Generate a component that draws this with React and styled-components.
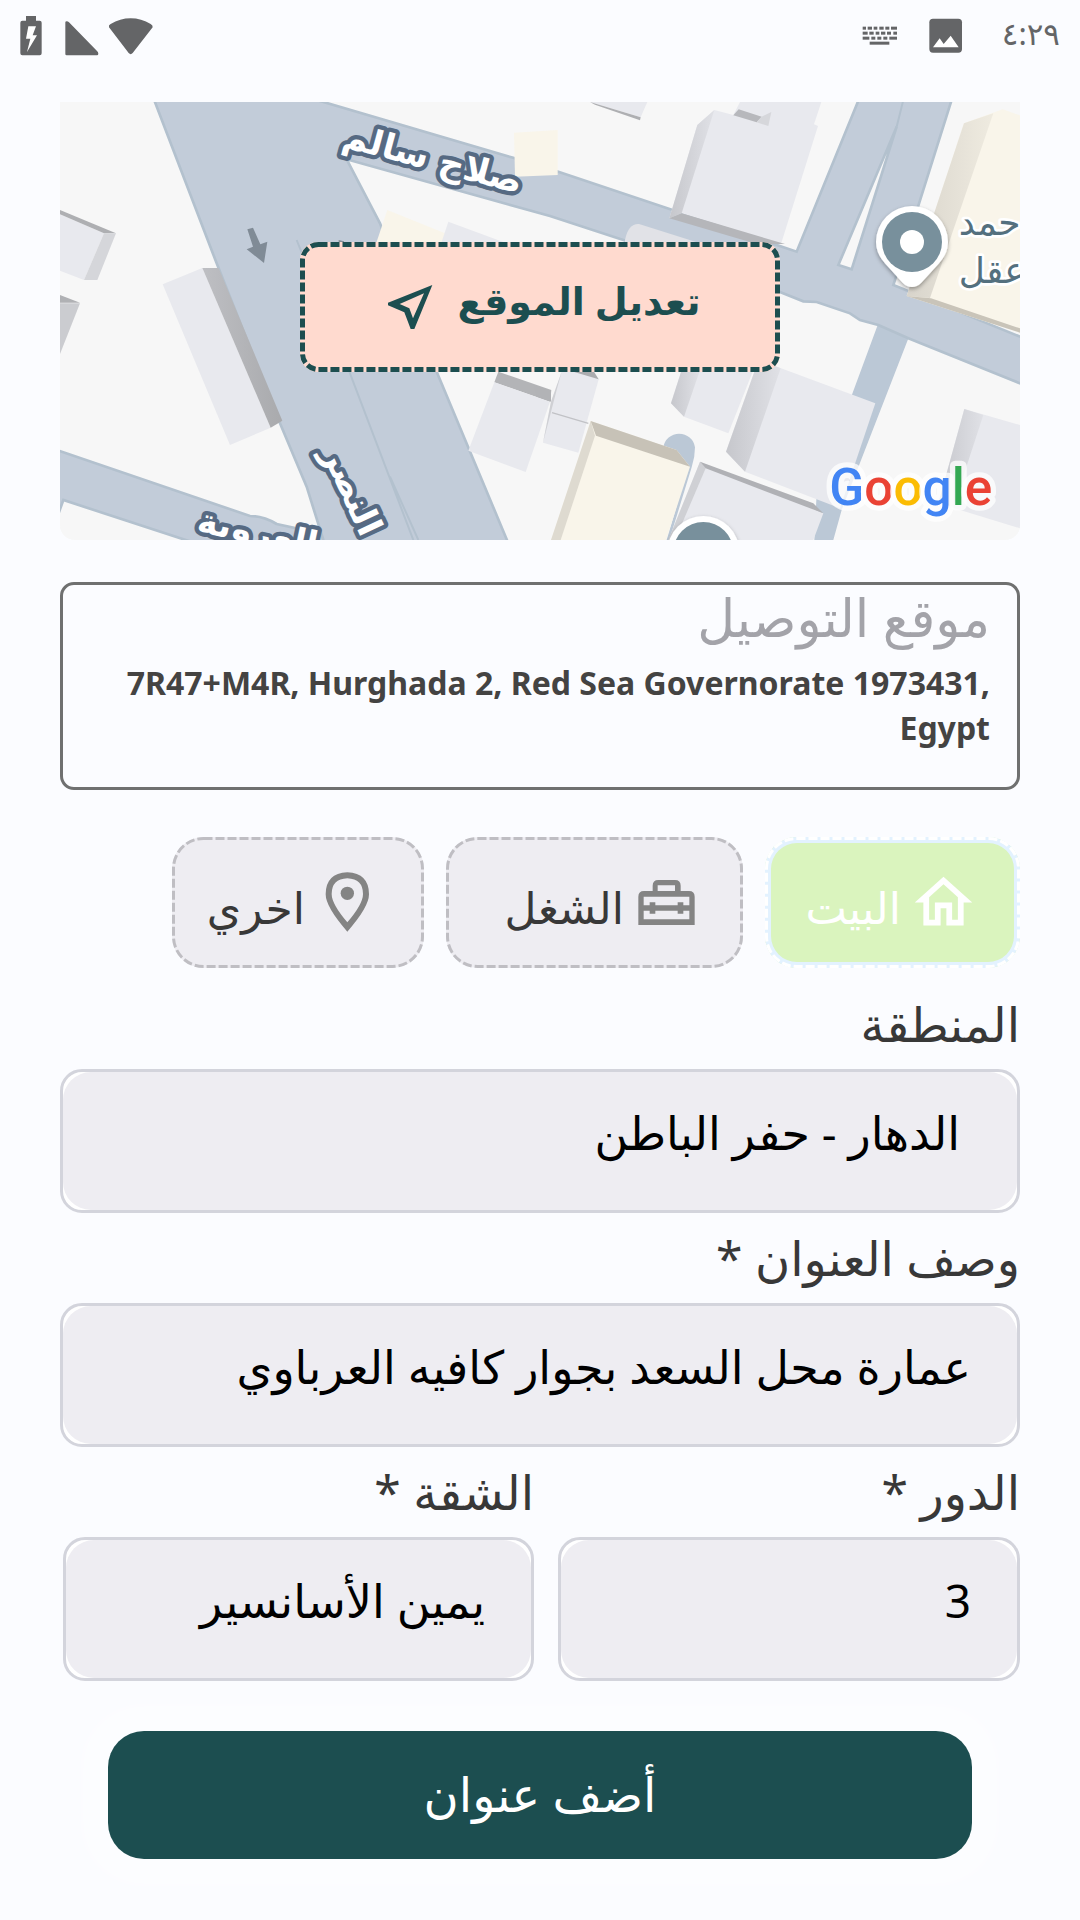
import React, { useState } from "react";
import styled, { createGlobalStyle } from "styled-components";

const GlobalStyle = createGlobalStyle`
  * { box-sizing: border-box; }
  body {
    margin: 0;
    background: #fbfcff;
    font-family: "Noto Sans", "DejaVu Sans", sans-serif;
    color: #383838;
  }
  button, input { font-family: inherit; }
`;

const Page = styled.div`
  min-height: 100vh;
  display: flex;
  flex-direction: column;
`;

const StatusBar = styled.header`
  display: flex;
  justify-content: space-between;
  align-items: center;
  height: 72px;
  margin-bottom: 30px;
  padding: 0 20px;
  color: #646567;
`;

const StatusGroup = styled.div`
  display: flex;
  align-items: center;
  gap: ${(p) => p.$gap}px;
`;

const Clock = styled.time`
  padding: 0 0 6px 8px;
  font-size: 31px;
  line-height: 40px;
`;

const Content = styled.main`
  display: flex;
  flex-direction: column;
  padding: 0 60px 60px;
`;

const MapPanel = styled.section`
  display: grid;
  place-items: center;
  height: 438px;
  margin-bottom: 42px;
  border-radius: 0 0 15px 15px;
  overflow: hidden;
  background: #f7f7f7;
  > * { grid-area: 1 / 1; }
`;

const MapDrawing = styled.svg`
  display: block;
  width: 100%;
  height: 438px;
`;

const Frame = styled.svg`
  position: absolute;
  inset: 0;
  width: 100%;
  height: 100%;
  overflow: visible;
  pointer-events: none;
`;

const EditButton = styled.button`
  position: relative;
  display: flex;
  align-items: center;
  justify-content: center;
  gap: 24px;
  width: 50%;
  height: 130px;
  margin-bottom: 28px;
  padding: 0 0 0 8px;
  border: 0;
  border-radius: 18px;
  background: #ffdacf;
  color: #1c4e50;
  font-size: 38px;
  line-height: 44px;
  font-weight: 700;
`;

const EditLabel = styled.span`
  padding-bottom: 14px;
`;

const AddressCard = styled.section`
  min-height: 208px;
  margin-bottom: 47px;
  padding: 0 27px 20px;
  border: 3px solid #6f7070;
  border-radius: 14px;
`;

const AddressTitle = styled.h2`
  margin: 0 0 12px;
  color: #a3a3a9;
  font-size: 52px;
  line-height: 63px;
  font-weight: 400;
`;

const AddressText = styled.p`
  margin: 0;
  color: #444342;
  font-size: 32px;
  line-height: 45px;
  font-weight: 700;
  text-align: right;
`;

const ChipRow = styled.div`
  display: flex;
  gap: 22px;
  margin-bottom: 11px;
`;

const Chip = styled.button`
  position: relative;
  display: flex;
  align-items: center;
  gap: 8px;
  min-width: ${(p) => p.$width}px;
  height: 131px;
  padding: 0 42px 0 32px;
  border: 0;
  border-radius: 32px;
  background: ${(p) => (p.$active ? "#daf4be" : "#eeedf2")};
  box-shadow: ${(p) => (p.$active ? "inset 0 0 0 6px #e3f2ff" : "none")};
  color: ${(p) => (p.$active ? "#ffffff" : "#383838")};
  font-size: 44px;
  line-height: 44px;
  svg { flex: none; }
`;

const ChipLabel = styled.span`
  padding-top: 8px;
`;

const Field = styled.div`
  display: flex;
  flex-direction: column;
`;

const FieldLabel = styled.label`
  height: 90px;
  font-size: 48px;
  line-height: 90px;
`;

const FieldBox = styled.div`
  border: 3px solid #d3d4dc;
  border-radius: 22px;
  background: #ffffff;
`;

const TextInput = styled.input`
  display: block;
  width: 100%;
  height: 138px;
  padding: 0 ${(p) => p.$inset}px 18px;
  border: 0;
  border-radius: 28px;
  outline: none;
  background: #eeedf2;
  color: #000000;
  font-size: 46px;
`;

const FieldPair = styled.div`
  display: grid;
  grid-template-columns: 462fr 471fr;
  gap: 24px;
  padding-left: 3px;
`;

const SubmitButton = styled.button`
  height: 128px;
  margin: 50px 48px 0;
  padding: 0 0 4px;
  border: 0;
  border-radius: 36px;
  background: #1c4e50;
  box-shadow: 0 0 12px 30px rgba(255, 255, 255, 0.3);
  color: #ffffff;
  font-size: 48px;
`;

const DashedFrame = ({ color, width, radius, dash }) => (
  <Frame aria-hidden="true">
    <rect
      x={width / 2}
      y={width / 2}
      rx={radius}
      fill="none"
      stroke={color}
      strokeWidth={width}
      strokeDasharray={dash}
      style={{ width: `calc(100% - ${width}px)`, height: `calc(100% - ${width}px)` }}
    />
  </Frame>
);

const BatteryIcon = () => (
  <svg width="24" height="40" viewBox="57 44 72 120" aria-hidden="true">
    <path fill="currentColor" d="M75 44h30v14h11q6 0 6 6v92q0 6-6 6H64q-6 0-6-6V64q0-6 6-6h11z" />
    <path fill="#fff" d="M82 75h23l-10 27h13l-30 50 10-40H75z" />
  </svg>
);

const SignalIcon = () => (
  <svg width="34" height="40" viewBox="191 44 102 120" aria-hidden="true">
    <path fill="currentColor" d="M192 63q0-3 4-3 4 0 7 3l84 86q4 4 4 8 0 5-4 5h-91q-4 0-4-4z" />
  </svg>
);

const WifiIcon = () => (
  <svg width="46" height="40" viewBox="314 44 138 120" aria-hidden="true">
    <path fill="currentColor" d="M317 78q-2-7 5-10 28-17 60-17t60 17q7 4 6 10l-60 77q-6 7-12 0z" />
  </svg>
);

const keyRows = [
  [82, [936, 10], [951, 13], [969, 11], [986, 13], [1004, 12], [1021, 18]],
  [97, [936, 15], [956, 13], [975, 11], [991, 13], [1009, 12], [1028, 11]],
  [112, [936, 20], [962, 12], [980, 12], [998, 12], [1016, 23]],
  [127, [957, 59]],
];

const KeyboardIcon = () => (
  <svg width="36" height="36" viewBox="934 56 108 108" aria-hidden="true" fill="currentColor">
    {keyRows.map(([y, ...keys]) =>
      keys.map(([x, w]) => <rect key={`${x}-${y}`} x={x} y={y} width={w} height="9" />)
    )}
  </svg>
);

const ImageIcon = () => (
  <svg width="34" height="36" viewBox="1129 55 102 108" aria-hidden="true">
    <rect x="1130" y="57" width="98" height="102" rx="11" fill="currentColor" />
    <path fill="#fff" d="M1141 143l20-27 12 17 21-25 24 35z" />
  </svg>
);

const SendIcon = () => (
  <svg width="46" height="46" viewBox="1013 582 138 138" aria-hidden="true">
    <path
      fill="currentColor"
      fillRule="evenodd"
      d="M1016 638l133-53-54 132h-11l-19-50-49-21zM1051 642l29 13 11 30 33-75z"
    />
  </svg>
);

const HomeIcon = () => (
  <svg width="69" height="69" viewBox="0 0 24 24" aria-hidden="true">
    <path
      fill="currentColor"
      d="M12 5.69l5 4.5V18h-2v-6H9v6H7v-7.81l5-4.5M12 3L2 12h3v8h6v-6h2v6h6v-8h3L12 3z"
    />
  </svg>
);

const ToolboxIcon = () => (
  <svg width="69" height="69" viewBox="91 144 207 207" aria-hidden="true" fill="#848484">
    <path
      fillRule="evenodd"
      d="M153 213v-16q0-17 17-17h50q17 0 17 17v16h25q17 0 17 17v85H110v-85q0-17 17-17zM168 213h52v-17h-52zM126 230v26h18v-9h17v9h67v-9h17v9h18v-26zM126 272v26h137v-26h-18v9h-17v-9h-67v9h-17v-9z"
    />
  </svg>
);

const PinIcon = () => (
  <svg width="69" height="69" viewBox="487 146 207 207" aria-hidden="true" fill="#848484">
    <path
      fillRule="evenodd"
      d="M590 159q65 3 65 66 0 38-65 112-65-74-65-112 0-63 65-66zM590 177q-47 2-47 47 0 30 47 85 47-55 47-85 0-45-47-47z"
    />
    <circle cx="590" cy="222" r="20" />
  </svg>
);

const logoLetters = [
  ["G", "#4285f4"],
  ["o", "#ea4335"],
  ["o", "#fbbc04"],
  ["g", "#4285f4"],
  ["l", "#34a853"],
  ["e", "#ea4335"],
];

const MapPin = ({ x, y }) => (
  <g transform={`translate(${x} ${y})`}>
    <path
      d="M0-108A108 108 0 0 1 108 0q0 35-28 65L28 122q-28 26-56 0L-80 65q-28-30-28-65A108 108 0 0 1 0-108z"
      fill="#fff"
      filter="url(#pinShadow)"
    />
    <circle r="90" fill="#78909c" />
    <circle r="36" fill="#fff" />
  </g>
);

const MapPicture = () => (
  <MapDrawing viewBox="30 36 2880 1314" preserveAspectRatio="xMidYMid slice" role="img" aria-label="خريطة">
    <defs>
      <filter id="pinShadow" x="-20%" y="-20%" width="140%" height="150%">
        <feDropShadow dx="0" dy="6" stdDeviation="6" floodOpacity="0.35" />
      </filter>
      <linearGradient id="side" x1="0" x2="1">
        <stop offset="0" stopColor="#c6c7cc" />
        <stop offset="1" stopColor="#e0e1e6" />
      </linearGradient>
      <linearGradient id="dark" x1="0" x2="1">
        <stop offset="0" stopColor="#bebfc3" />
        <stop offset="1" stopColor="#a9aaad" />
      </linearGradient>
      <linearGradient id="sand" x1="0" x2="1">
        <stop offset="0" stopColor="#d8d4cb" />
        <stop offset="1" stopColor="#efebe0" />
      </linearGradient>
    </defs>
    <rect x="30" y="36" width="2880" height="1314" fill="#f7f7f7" />

    <g fill="#bbc8d6">
      <path d="M2485 700L2577 740 2375 1260 2350 1350H2293L2300 1210 2400 930z" />
      <path d="M1840 1072a48 48 0 0 1 95 0q0 30-10 60L1858 1350h-8L1915 1130z" />
    </g>

    <g fill="#c2ccd9" stroke="#b3c1ce" strokeWidth="8">
      <path d="M20 1080L600 1278q40 0 80 24L810 1330 850 1400H560L40 1230 15 1300z" />
      <path d="M800 30L1395 205 1525 245 2240 485 2430 20H2708L2530 585 2920 744V884L2575 745 2485 705 2430 690 2400 670 2300 636 2260 634 2188 605 1720 450 1500 378 890 208 990 400 1160 845 1375 1360H824L820 1350 770 1190 690 1000 500 520 311 26z" />
    </g>
    <path d="M2540 110L2365 525 2405 538z" fill="#f7f7f7" stroke="#b3c1ce" strokeWidth="8" />
    <path d="M2560 30L2540 110M740 450L900 850 1090 1350M1020 1160L1105 1350" fill="none" stroke="#b3c1ce" strokeWidth="6" />

    <g fill="#808b96">
      <path d="M592 418l17-5 22 50 21-8-10 64-52-41 19-8z" />
      <path d="M866 450l16 4v8h-16z" />
    </g>

    <path d="M30 373L162 430 102 570 30 542z" fill="#e8e9ee" />
    <path d="M30 360L198 430H162L30 373z" fill="#aeafb2" />
    <path d="M162 430h36L142 570h-40z" fill="#d5d6da" />
    <path d="M30 615L90 638H30z" fill="#b0b1b4" />
    <path d="M30 640H90L30 792z" fill="#cbccd0" />
    <path d="M338 583L457 534 662 1013 540 1065z" fill="#e8e9ee" />
    <path d="M457 534h49L697 992 662 1013z" fill="url(#dark)" />
    <path d="M1012 360L1185 430 1170 500H965z" fill="#f9f5ea" />
    <path d="M1195 395L1370 460 1350 500H1160z" fill="#e8e9ee" />
    <path d="M1392 128L1523 120V255L1395 260z" fill="#f9f5ea" />
    <path d="M1345 845L1504 900 1500 935 1333 877z" fill="#b3b4b7" />
    <path d="M1333 877L1500 935 1427 1146 1255 1082z" fill="#e8e9ee" />

    <g transform="translate(1470 0)">
      <path d="M150 36H322L302 82z" fill="#e8e9ee" />
      <path d="M150 36L302 82 300 91 165 44z" fill="#aeafb2" />
      <path d="M600 36H844L822 103 834 108 723 462 425 370 388 385 472 105 523 60 580 75z" fill="#e8e9ee" />
      <path d="M523 60L472 105 388 385 425 370z" fill="url(#side)" />
      <path d="M388 385L425 370 735 462H650z" fill="#b5b6ba" />
      <path d="M596 58L665 80 650 97 580 76z" fill="#b7b8bc" />
      <path d="M665 80L694 66 685 108 650 97z" fill="#d6d7db" />
      <path d="M255 450Q265 400 297 402L480 460H255z" fill="#e1e2e7" />

      <path d="M1272 100L1388 58 1440 76V728L1100 618z" fill="#f9f5ea" />
      <path d="M1272 100L1360 70 1170 624 1100 618z" fill="url(#sand)" />
      <path d="M1100 618L1173 625 1440 715V728z" fill="#c9c4b9" />

      <path d="M65 845H150L176 868 115 1088 9 1058 33 935z" fill="#e8e9ee" />
      <path d="M65 845L33 935 9 1058 50 900z" fill="#cfd0d4" />
      <path d="M90 842H160L176 868z" fill="#abacaf" />
      <path d="M36 968L145 1000" stroke="#c1c2c6" strokeWidth="4" />
      <path d="M-20 885L33 904V935L-10 920z" fill="#b2b3b6" />
      <path d="M425 840H640L565 1030 432 980 393 940z" fill="#e8e9ee" />
      <path d="M425 840H480L432 980 393 940z" fill="url(#side)" />
      <path d="M645 840L705 828 1006 940 900 1255 615 1145 558 1085z" fill="#e8e9ee" />
      <path d="M645 840L705 828 722 835 615 1145 558 1085z" fill="url(#side)" />
      <path d="M1273 957L1440 1005V1315L1195 1240z" fill="#e8e9ee" />
      <path d="M1273 957L1330 975 1240 1250 1195 1240z" fill="url(#side)" />

      <path d="M152 993L410 1080 450 1130 378 1350H33z" fill="#f9f5ea" />
      <path d="M152 993L165 1037 62 1350H33z" fill="#dedad0" />
      <path d="M152 993L410 1080 450 1130 168 1037z" fill="#c7c2b7" />
      <path d="M480 1115L850 1270 820 1350H385z" fill="#e8e9ee" />
      <path d="M480 1115L497 1135 405 1350H385z" fill="#cfd0d4" />
      <path d="M480 1115L820 1240 850 1270 497 1135z" fill="#b0b1b5" />
    </g>

    <MapPin x={2586} y={456} />
    <MapPin x={1960} y={1386} />

    <g
      fontFamily='"DejaVu Sans", sans-serif'
      textAnchor="middle"
      direction="rtl"
      strokeLinejoin="round"
      paintOrder="stroke"
    >
      <g fill="#fff" stroke="#566a83" strokeWidth="26" fontSize="104" fontWeight="700">
        <text transform="translate(1140 240) rotate(15)">صلاح سالم</text>
        <text transform="translate(874 1216) rotate(65)">النصر</text>
        <text transform="translate(616 1362) rotate(12)">العروبة</text>
      </g>
      <g fill="#54707e" stroke="#fff" strokeWidth="16" fontSize="108" textAnchor="end">
        <text x="2726" y="436">حمد</text>
        <text x="2726" y="580">عقل</text>
      </g>
    </g>

    <text
      x="2338"
      y="1246"
      fontFamily="Roboto, sans-serif"
      fontSize="154"
      fontWeight="500"
      stroke="rgba(255,255,255,0.75)"
      strokeWidth="32"
      strokeLinejoin="round"
      paintOrder="stroke"
      direction="ltr"
    >
      {logoLetters.map(([letter, color], i) => (
        <tspan key={i} fill={color}>{letter}</tspan>
      ))}
    </text>
  </MapDrawing>
);

const places = [
  { id: "home", label: "البيت", Icon: HomeIcon, width: 255 },
  { id: "work", label: "الشغل", Icon: ToolboxIcon, width: 297 },
  { id: "other", label: "اخري", Icon: PinIcon, width: 252 },
];

const FormField = ({ id, label, value, inset = 46 }) => (
  <Field>
    <FieldLabel htmlFor={id}>{label}</FieldLabel>
    <FieldBox>
      <TextInput id={id} type="text" defaultValue={value} $inset={inset} />
    </FieldBox>
  </Field>
);

export default function App() {
  const [place, setPlace] = useState("home");
  return (
    <Page>
      <GlobalStyle />
      <StatusBar>
        <StatusGroup $gap={21}>
          <BatteryIcon />
          <StatusGroup $gap={9}>
            <SignalIcon />
            <WifiIcon />
          </StatusGroup>
        </StatusGroup>
        <StatusGroup $gap={31}>
          <KeyboardIcon />
          <ImageIcon />
          <Clock dir="ltr">٤:٢٩</Clock>
        </StatusGroup>
      </StatusBar>
      <Content dir="rtl" lang="ar">
        <MapPanel>
          <MapPicture />
          <EditButton type="button">
            <DashedFrame color="#1c4e50" width={5} radius={16} dash="9 3" />
            <EditLabel>تعديل الموقع</EditLabel>
            <SendIcon />
          </EditButton>
        </MapPanel>
        <AddressCard>
          <AddressTitle>موقع التوصيل</AddressTitle>
          <AddressText dir="ltr">7R47+M4R, Hurghada 2, Red Sea Governorate 1973431, Egypt</AddressText>
        </AddressCard>
        <ChipRow>
          {places.map(({ id, label, Icon, width }) => (
            <Chip
              key={id}
              type="button"
              aria-pressed={place === id}
              $active={place === id}
              $width={width}
              onClick={() => setPlace(id)}
            >
              <DashedFrame
                color={place === id ? "#ffffff" : "#bfbec3"}
                width={3}
                radius={30}
                dash="9 3"
              />
              <Icon />
              <ChipLabel>{label}</ChipLabel>
            </Chip>
          ))}
        </ChipRow>
        <FormField id="area" label="المنطقة" value="الدهار - حفر الباطن" inset={57} />
        <FormField id="description" label="وصف العنوان *" value="عمارة محل السعد بجوار كافيه العرباوي" />
        <FieldPair>
          <FormField id="floor" label="الدور *" value="3" />
          <FormField id="flat" label="الشقة *" value="يمين الأسانسير" />
        </FieldPair>
        <SubmitButton type="button">أضف عنوان</SubmitButton>
      </Content>
    </Page>
  );
}
